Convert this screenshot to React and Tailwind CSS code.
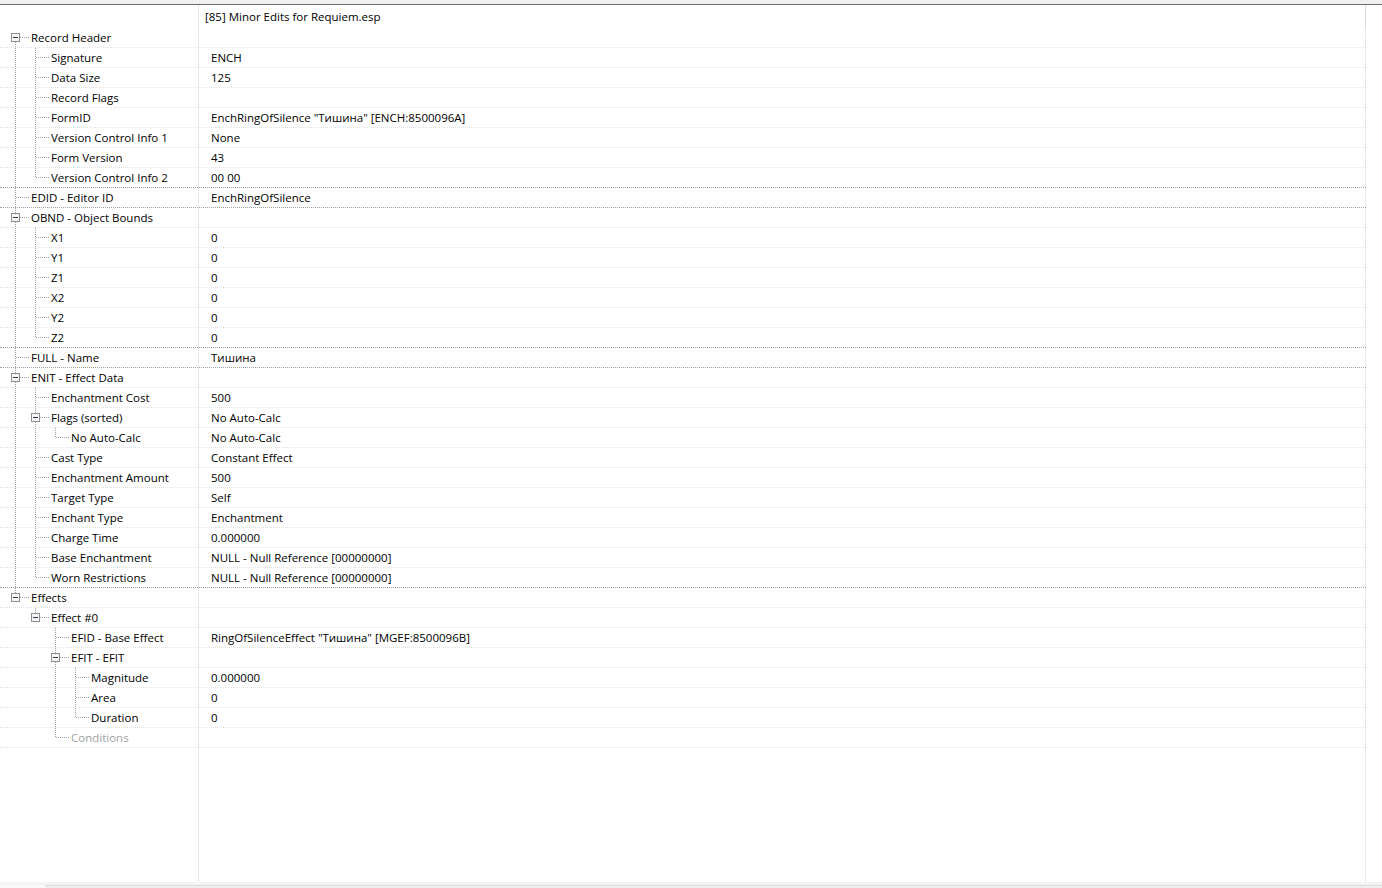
const tree = [
  {
    label: "Record Header",
    children: [
      { label: "Signature", value: "ENCH" },
      { label: "Data Size", value: "125" },
      { label: "Record Flags", value: "" },
      { label: "FormID", value: 'EnchRingOfSilence "Тишина" [ENCH:8500096A]' },
      { label: "Version Control Info 1", value: "None" },
      { label: "Form Version", value: "43" },
      { label: "Version Control Info 2", value: "00 00" },
    ],
  },
  { label: "EDID - Editor ID", value: "EnchRingOfSilence" },
  {
    label: "OBND - Object Bounds",
    children: [
      { label: "X1", value: "0" },
      { label: "Y1", value: "0" },
      { label: "Z1", value: "0" },
      { label: "X2", value: "0" },
      { label: "Y2", value: "0" },
      { label: "Z2", value: "0" },
    ],
  },
  { label: "FULL - Name", value: "Тишина" },
  {
    label: "ENIT - Effect Data",
    children: [
      { label: "Enchantment Cost", value: "500" },
      {
        label: "Flags (sorted)",
        value: "No Auto-Calc",
        children: [{ label: "No Auto-Calc", value: "No Auto-Calc" }],
      },
      { label: "Cast Type", value: "Constant Effect" },
      { label: "Enchantment Amount", value: "500" },
      { label: "Target Type", value: "Self" },
      { label: "Enchant Type", value: "Enchantment" },
      { label: "Charge Time", value: "0.000000" },
      { label: "Base Enchantment", value: "NULL - Null Reference [00000000]" },
      { label: "Worn Restrictions", value: "NULL - Null Reference [00000000]" },
    ],
  },
  {
    label: "Effects",
    children: [
      {
        label: "Effect #0",
        children: [
          { label: "EFID - Base Effect", value: 'RingOfSilenceEffect "Тишина" [MGEF:8500096B]' },
          {
            label: "EFIT - EFIT",
            children: [
              { label: "Magnitude", value: "0.000000" },
              { label: "Area", value: "0" },
              { label: "Duration", value: "0" },
            ],
          },
          { label: "Conditions", value: "", muted: true },
        ],
      },
    ],
  },
];

function flatten(nodes, level, ancestors, out) {
  nodes.forEach((n, i) => {
    const last = i === nodes.length - 1;
    out.push({ ...n, level, ancestors, last, first: level === 0 && i === 0 });
    if (n.children) flatten(n.children, level + 1, [...ancestors, last], out);
    if (level === 0 && !last) out[out.length - 1].groupEnd = true;
  });
  return out;
}

const rows = flatten(tree, 0, [], []);

const LINE = "#a0a0a0";

function TreeLines({ row }) {
  const { level, ancestors, last, first, children } = row;
  const w = 20 * level + 31;
  const x = 20 * level + 15.5;
  return (
    <svg width={w} height={20} className="shrink-0 block" shapeRendering="crispEdges">
      {ancestors.map((isLast, k) =>
        isLast ? null : (
          <line key={k} x1={20 * k + 15.5} y1={0} x2={20 * k + 15.5} y2={20} stroke={LINE} strokeDasharray="1 1" />
        )
      )}
      {!first && <line x1={x} y1={0} x2={x} y2={9} stroke={LINE} strokeDasharray="1 1" />}
      {!last && <line x1={x} y1={10} x2={x} y2={20} stroke={LINE} strokeDasharray="1 1" />}
      <line x1={20 * level + 16} y1={9.5} x2={20 * level + 29} y2={9.5} stroke={LINE} strokeDasharray="1 1" />
      {children && (
        <g>
          <rect x={20 * level + 11.5} y={5.5} width={8} height={8} fill="#f6f6f6" stroke="#8f8f8f" />
          <line x1={20 * level + 13} y1={9.5} x2={20 * level + 18} y2={9.5} stroke="#2b3a4f" />
        </g>
      )}
    </svg>
  );
}

export default function App() {
  return (
    <div className="w-[1382px] h-[888px] bg-white overflow-hidden font-['Open_Sans',sans-serif] text-[11.5px] text-black flex flex-col">
      <div className="h-[4px] bg-[#f0f0f0]" />
      <div className="h-[1px] bg-[#6b6b6b]" />

      <div className="flex flex-1 min-h-0">
        <div className="w-[1366px] flex flex-col">
          {/* column header */}
          <div className="flex h-[23px] shrink-0">
            <div className="w-[199px] shrink-0 border-r border-[#e3e3e3]" />
            <div className="flex-1 pl-[6px] leading-[23px] border-r border-[#d9d9d9] whitespace-nowrap">
              [85] Minor Edits for Requiem.esp
            </div>
          </div>

          {/* record rows */}
          {rows.map((row, i) => (
            <div
              key={i}
              className={
                "flex h-[20px] shrink-0 border-b border-dotted " +
                (row.groupEnd ? "border-[#a0a0a0]" : "border-[#e2e2e2]")
              }
            >
              <div className="w-[199px] shrink-0 flex items-start border-r border-dotted border-[#d2d2d2] whitespace-nowrap">
                <TreeLines row={row} />
                <span className={"leading-[19px] " + (row.muted ? "text-[#a2a2a2]" : "")}>{row.label}</span>
              </div>
              <div className="flex-1 pl-[12px] leading-[19px] border-r border-dotted border-[#d2d2d2] whitespace-nowrap">
                {row.value}
              </div>
            </div>
          ))}

          {/* empty space below the tree */}
          <div className="flex flex-1">
            <div className="w-[199px] shrink-0 border-r border-dotted border-[#d2d2d2]" />
            <div className="flex-1 border-r border-dotted border-[#d2d2d2]" />
          </div>
        </div>
        <div className="flex-1" />
      </div>

      {/* bottom scrollbar strip */}
      <div className="h-[3px] mt-[1px] bg-[#f3f3f3]" />
      <div className="h-[3px] flex">
        <div className="w-[45px] bg-[#f9f9f9]" />
        <div className="flex-1 bg-[#eeeeee] border-t border-[#dedede]" />
      </div>
    </div>
  );
}
